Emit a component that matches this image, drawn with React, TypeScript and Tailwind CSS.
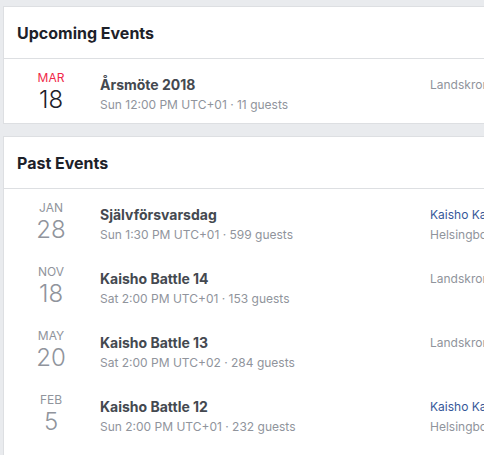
import type { ReactNode } from "react";

type EventRow = {
  month: string;
  day: string;
  title: string;
  meta: string;
  host?: string;
  place: string;
};

const UPCOMING: EventRow[] = [
  { month: "MAR", day: "18", title: "Årsmöte 2018", meta: "Sun 12:00 PM UTC+01 · 11 guests", place: "Landskrona, Sweden" },
];

const PAST: EventRow[] = [
  { month: "JAN", day: "28", title: "Självförsvarsdag", meta: "Sun 1:30 PM UTC+01 · 599 guests", host: "Kaisho Karate", place: "Helsingborg, Sweden" },
  { month: "NOV", day: "18", title: "Kaisho Battle 14", meta: "Sat 2:00 PM UTC+01 · 153 guests", place: "Landskrona, Sweden" },
  { month: "MAY", day: "20", title: "Kaisho Battle 13", meta: "Sat 2:00 PM UTC+02 · 284 guests", place: "Landskrona, Sweden" },
  { month: "FEB", day: "5", title: "Kaisho Battle 12", meta: "Sun 2:00 PM UTC+01 · 232 guests", host: "Kaisho Karate", place: "Helsingborg, Sweden" },
];

function Card({ title, children, className = "" }: { title: string; children: ReactNode; className?: string }) {
  return (
    <section className={`w-[600px] shrink-0 border border-[#dddfe2] bg-white ${className}`}>
      <header className="flex h-[52px] items-center border-b border-[#dddfe2] px-[13px]">
        <h2 className="pt-px text-[16px] font-bold text-[#1d2129]">{title}</h2>
      </header>
      {children}
    </section>
  );
}

function Row({ ev, upcoming }: { ev: EventRow; upcoming?: boolean }) {
  return (
    <div className="flex h-16">
      <div className="ml-[12px] w-[70px] shrink-0 pt-[11px] text-center">
        <div className={`text-[12px] leading-4 ${upcoming ? "text-[#f02849]" : "text-[#90949c]"}`}>{ev.month}</div>
        <div className={`text-[24px] leading-7 font-light ${upcoming ? "text-[#1d2129]" : "text-[#90949c]"}`}>{ev.day}</div>
      </div>
      <div className="ml-[14px] w-[330px] shrink-0 pt-[17px]">
        <div className="text-[14px] leading-[18px] font-bold text-[#444950]">{ev.title}</div>
        <div className="mt-[3px] text-[12px] leading-4 text-[#90949c]">{ev.meta}</div>
      </div>
      <div className="whitespace-nowrap pt-[18px] text-[12px] leading-4">
        {ev.host ? (
          <>
            <div className="text-[#365899]">{ev.host}</div>
            <div className="mt-[4px] text-[#90949c]">{ev.place}</div>
          </>
        ) : (
          <div className="text-[#90949c]">{ev.place}</div>
        )}
      </div>
    </div>
  );
}

export default function App() {
  return (
    <div
      className="flex h-[455px] w-[484px] flex-col gap-3 overflow-hidden bg-[#e9ebee] pl-[3px] pt-[6px]"
      style={{ fontFamily: "Inter, 'Liberation Sans', sans-serif" }}
    >
      <Card title="Upcoming Events">
        {UPCOMING.map((ev) => <Row key={ev.title} ev={ev} upcoming />)}
      </Card>
      <Card title="Past Events" className="pb-6">
        {PAST.map((ev) => <Row key={ev.title} ev={ev} />)}
      </Card>
    </div>
  );
}
